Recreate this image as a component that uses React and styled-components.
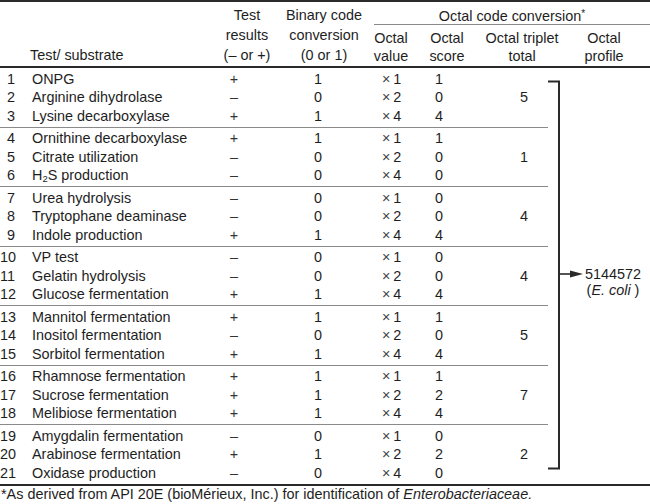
import React from "react"
import styled, { createGlobalStyle } from "styled-components"

const GlobalStyle = createGlobalStyle`
  body {
    margin: 0;
    background: #fff;
    font-family: "Liberation Sans", Arial, sans-serif;
    color: #1e1e1e;
  }
`

const Sub = styled.sub`
  font-size: 9.5px;
  vertical-align: -2px;
  line-height: 0;
`

const groups = [
  {
    total: 5,
    rows: [
      [1, "ONPG", 1],
      [2, "Arginine dihydrolase", 0],
      [3, "Lysine decarboxylase", 1],
    ],
  },
  {
    total: 1,
    rows: [
      [4, "Ornithine decarboxylase", 1],
      [5, "Citrate utilization", 0],
      [6, <>H<Sub>2</Sub>S production</>, 0],
    ],
  },
  {
    total: 4,
    rows: [
      [7, "Urea hydrolysis", 0],
      [8, "Tryptophane deaminase", 0],
      [9, "Indole production", 1],
    ],
  },
  {
    total: 4,
    rows: [
      [10, "VP test", 0],
      [11, "Gelatin hydrolysis", 0],
      [12, "Glucose fermentation", 1],
    ],
  },
  {
    total: 5,
    rows: [
      [13, "Mannitol fermentation", 1],
      [14, "Inositol fermentation", 0],
      [15, "Sorbitol fermentation", 1],
    ],
  },
  {
    total: 7,
    rows: [
      [16, "Rhamnose fermentation", 1],
      [17, "Sucrose fermentation", 1],
      [18, "Melibiose fermentation", 1],
    ],
  },
  {
    total: 2,
    rows: [
      [19, "Amygdalin fermentation", 0],
      [20, "Arabinose fermentation", 1],
      [21, "Oxidase production", 0],
    ],
  },
]

const octals = [1, 2, 4]

const App = () => {
  return (
    <Page>
      <GlobalStyle />
      <Header>
        <HeadCell $col={1} />
        <HeadCell $col={2} $left>Test/ substrate</HeadCell>
        <HeadCell $col={3}>
          <span>Test</span>
          <span>results</span>
          <span>(– or +)</span>
        </HeadCell>
        <HeadCell $col={4}>
          <span>Binary code</span>
          <span>conversion</span>
          <span>(0 or 1)</span>
        </HeadCell>
        <GroupTitle>
          Octal code conversion<Star>*</Star>
        </GroupTitle>
        <SubHead $col={5}>
          <span>Octal</span>
          <span>value</span>
        </SubHead>
        <SubHead $col={6}>
          <span>Octal</span>
          <span>score</span>
        </SubHead>
        <SubHead $col={7}>
          <span>Octal triplet</span>
          <span>total</span>
        </SubHead>
        <SubHead $col={8}>
          <span>Octal</span>
          <span>profile</span>
        </SubHead>
      </Header>

      <Body>
        <Groups>
          {groups.map((g, gi) => (
            <Group key={gi} $first={gi === 0}>
              <Rows>
                {g.rows.map(([num, name, bin], ri) => (
                  <Row key={num}>
                    <Num>{num}</Num>
                    <Name>{name}</Name>
                    <Result>{bin ? "+" : "–"}</Result>
                    <Binary>{bin}</Binary>
                    <OctalValue>
                      <Times>×</Times>
                      {"\u2009" + octals[ri]}
                    </OctalValue>
                    <OctalScore>{bin * octals[ri]}</OctalScore>
                  </Row>
                ))}
              </Rows>
              <Triplet>{g.total}</Triplet>
            </Group>
          ))}
        </Groups>

        <Profile>
          <svg width="35" height="390" viewBox="0 0 35 390">
            <path d="M0 1.5 H11 V388.5 H0" fill="none" stroke="#2a2a2a" strokeWidth="2" />
            <line x1="11" y1="194" x2="25" y2="194" stroke="#2a2a2a" strokeWidth="1.6" />
            <polygon points="22,190.6 35,194 22,197.4" fill="#2a2a2a" />
          </svg>
          <ProfileText>
            <span>5144572</span>
            <span>
              (<i>E. coli</i> )
            </span>
          </ProfileText>
        </Profile>
      </Body>

      <Footnote>
        *As derived from API 20E (bioMérieux, Inc.) for identification of{" "}
        <i>Enterobacteriaceae.</i>
      </Footnote>
    </Page>
  )
}

const Page = styled.div`
  width: 650px;
  font-size: 14.4px;
`

const Header = styled.div`
  display: grid;
  grid-template-columns: 32px 188px 54px 100px 34px 78px 72px 92px;
  grid-template-rows: 23px 41px;
  border-top: 2px solid #2a2a2a;
  border-bottom: 2px solid #2a2a2a;
`

const HeadCell = styled.div`
  grid-column: ${p => p.$col};
  grid-row: 1 / span 2;
  align-self: end;
  display: flex;
  flex-direction: column;
  align-items: ${p => (p.$left ? "flex-start" : "center")};
  line-height: 20px;
  padding-bottom: 1px;
  white-space: nowrap;
  ${p => p.$left && "margin-left: -2px;"}
`

const GroupTitle = styled.div`
  grid-column: 5 / span 4;
  grid-row: 1;
  text-align: center;
  line-height: 20px;
  padding-top: 2px;
  border-bottom: 1px solid #8a8a8a;
`

const Star = styled.span`
  font-size: 10px;
  vertical-align: 4px;
`

const SubHead = styled.div`
  grid-column: ${p => p.$col};
  grid-row: 2;
  align-self: end;
  display: flex;
  flex-direction: column;
  align-items: center;
  line-height: 18px;
  padding-bottom: 1px;
  white-space: nowrap;
`

const Body = styled.div`
  display: flex;
  border-bottom: 2px solid #2a2a2a;
`

const Groups = styled.div`
  width: 548px;
  display: flex;
  flex-direction: column;
`

const Group = styled.div`
  display: flex;
  padding: 1.5px 0;
  border-top: ${p => (p.$first ? "none" : "1px solid #8a8a8a")};
`

const Rows = styled.div`
  width: 500px;
  display: flex;
  flex-direction: column;
`

const Row = styled.div`
  display: grid;
  grid-template-columns: 32px 180px 44px 124px 54px 66px;
  height: 18.5px;
  line-height: 18.5px;
  white-space: nowrap;
`

const Num = styled.div`
  text-align: right;
  padding-right: 17px;
`

const Name = styled.div``

const Result = styled.div`
  text-align: center;
  color: #333;
`

const Binary = styled.div`
  text-align: center;
`

const OctalValue = styled.div`
  padding-left: 2px;
`

const Times = styled.span`
  color: #444;
`

const OctalScore = styled.div`
  padding-left: 1px;
`

const Triplet = styled.div`
  width: 48px;
  display: flex;
  align-items: center;
  justify-content: center;
`

const Profile = styled.div`
  flex: 1;
  display: flex;
  align-items: center;
  padding: 12px 0 13.5px;

  svg {
    display: block;
    flex-shrink: 0;
  }
`

const ProfileText = styled.div`
  display: flex;
  flex-direction: column;
  align-items: center;
  line-height: 16px;
  margin-left: 2px;
  margin-top: 14px;
`

const Footnote = styled.div`
  font-size: 14.4px;
  line-height: 16px;
  padding-left: 1px;
  white-space: nowrap;
`

export default App
